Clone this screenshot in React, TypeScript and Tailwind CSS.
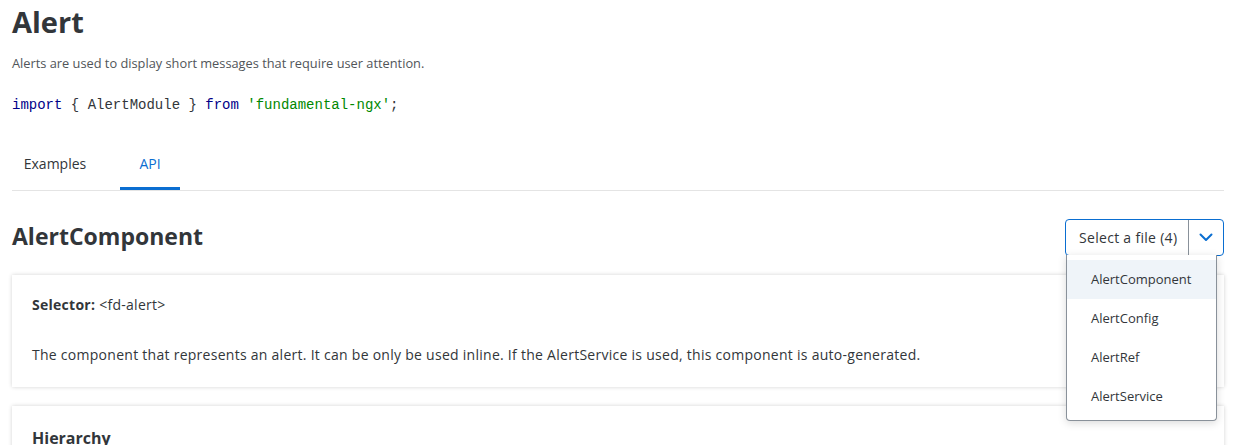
import React from "react";

export default function App() {
  const items = ["AlertComponent", "AlertConfig", "AlertRef", "AlertService"];
  return (
    <div className="relative h-[445px] w-[1247px] overflow-hidden bg-white pl-3 pr-[23px] text-[#32363a]" style={{ fontFamily: '"Open Sans", "Noto Sans", sans-serif' }}>
      <h1 className="pt-[2px] text-[29px] font-bold leading-[40px]">Alert</h1>
      <p className="mt-[13px] text-[12.8px] leading-[16px] text-[#515559]">Alerts are used to display short messages that require user attention.</p>
      <div className="mt-[26px] text-[14px] leading-[16px]" style={{ fontFamily: '"Liberation Mono", "Courier New", monospace' }}>
        <span className="text-[#000088]">import</span> {"{ AlertModule }"} <span className="text-[#000088]">from</span>{" "}
        <span className="text-[#008800]">'fundamental-ngx'</span>;
      </div>
      <div className="mt-[34px] flex h-[44px] border-b border-[#e4e4e4] text-[14px]">
        <div className="flex h-full w-[84px] items-start justify-center pt-[6px] pl-[2px] text-[#32363a]">Examples</div>
        <div className="ml-[24px] flex h-full w-[60px] items-start justify-center border-b-[3px] border-[#0a6ed1] pt-[6px] text-[#0a6ed1]">API</div>
      </div>
      <div className="mt-[28px] flex items-center justify-between">
        <h2 className="-mt-[4px] text-[23px] font-bold leading-[36px]">AlertComponent</h2>
        <div className="relative">
          <div className="flex h-[37px] w-[159px] items-stretch rounded-[4px] border border-[#0a6ed1] bg-white">
            <div className="flex flex-1 items-center pl-[13px] text-[14px] tracking-[0.3px] text-[#32363a]">Select a file (4)</div>
            <div className="flex w-[35px] items-center justify-center border-l border-[#89919a]">
              <svg width="14" height="9" viewBox="0 0 14 9" fill="none">
                <path d="M1.5 1.5 L7 7 L12.5 1.5" stroke="#0a6ed1" strokeWidth="2" strokeLinecap="round" strokeLinejoin="round" />
              </svg>
            </div>
          </div>
        </div>
      </div>
      <div className="mt-[19px] flex flex-col gap-[19px]">
        <div className="h-[112px] bg-white px-5 pt-[20px] text-[14px] tracking-[0.27px] shadow-[0_0_4px_rgba(0,0,0,0.18)]">
          <div className="leading-[20px]"><span className="font-bold">Selector:</span> {"<fd-alert>"}</div>
          <div className="mt-[30px] leading-[20px]">The component that represents an alert. It can be only be used inline. If the AlertService is used, this component is auto-generated.</div>
        </div>
        <div className="h-[80px] bg-white px-5 pt-[22px] shadow-[0_0_4px_rgba(0,0,0,0.18)]">
          <div className="text-[16px] font-bold leading-[20px]">Hierarchy</div>
        </div>
      </div>
      <div className="absolute left-[1066px] top-[255px] w-[151px] rounded-b-[4px] border border-t-0 border-[#89919a] bg-white py-[4px] pt-[5px] shadow-[0_2px_8px_rgba(0,0,0,0.15)]">
        {items.map((it, i) => (
          <div key={it} className={`flex h-[39px] items-center pl-[24px] text-[13px] text-[#32363a] ${i === 0 ? "bg-[#eff4f9]" : ""}`}>{it}</div>
        ))}
      </div>
    </div>
  );
}
